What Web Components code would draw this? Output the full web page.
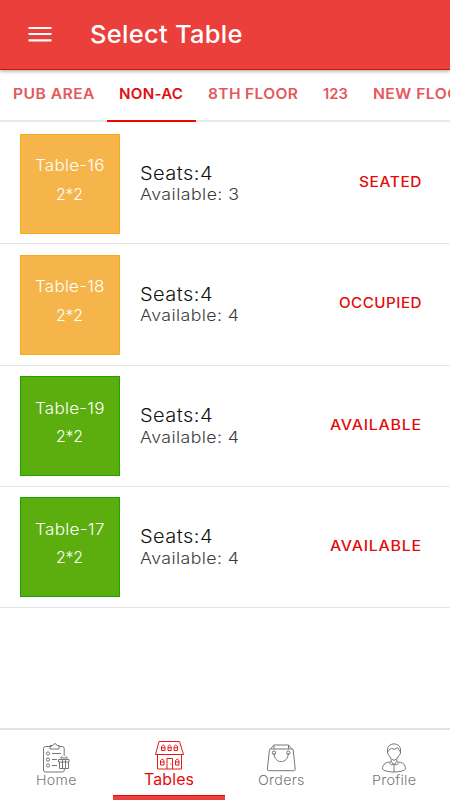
<!DOCTYPE html>
<html lang="en">
<head>
<meta charset="utf-8">
<title>Select Table</title>
<style>
html,body{margin:0;height:100%}
body{font-family:Inter,"Open Sans",sans-serif;background:#fff;overflow:hidden}
</style>
</head>
<body>
<table-app></table-app>
<script>
const shadow=(el,html)=>{const t=document.createElement('template');t.innerHTML=html;
  const r=el.attachShadow({mode:'open'});r.append(t.content.cloneNode(true));return r;};

/* One line of text, widened so that it spans the width given in "w":
   the letters take most of the extra width, the tracking takes the rest. */
class FitText extends HTMLElement{
  connectedCallback(){
    if(this.shadowRoot)return;
    const r=shadow(this,`<style>:host{display:block;white-space:nowrap;line-height:1}span{display:inline-block;transform-origin:0 0}</style><span></span>`);
    const s=r.querySelector('span'),t=this.getAttribute('text');s.textContent=t;
    const w=+this.getAttribute('w'),n=s.getBoundingClientRect().width;
    const k=1+(w/n-1)*.65,gap=(w/k-n)/(t.length-1);
    s.style.letterSpacing=gap+'px';
    s.style.transform=`scaleX(${k})`;
    this.style.width=w+'px';
  }
}

class AppHeader extends HTMLElement{
  connectedCallback(){shadow(this,`<style>
  :host{display:flex;align-items:center;box-sizing:border-box;height:70px;flex:none;background:#ea3f3b;border-bottom:1px solid #df0b08;
    padding:0 0 1px 28px;gap:38px;color:#fff;box-shadow:0 1px 4px rgba(0,0,0,.38);position:relative;z-index:1}
  svg{display:block}fit-text{font-size:24.5px;font-weight:500}
  </style><svg width="24" height="18"><path d="M.5 3h23M.5 9h23M.5 15.3h23" stroke="#fff" stroke-width="2.2"/></svg>
  <fit-text text="Select Table" w="152.500"></fit-text>`)}
}

class TabBar extends HTMLElement{
  connectedCallback(){
    const tabs=[['PUB AREA',81.5],['NON-AC',64,1],['8TH FLOOR',90],['123',25],['NEW FLOOR',97]];
    shadow(this,`<style>
    :host{display:block;height:52px;flex:none;overflow:hidden}
    div{flex:none;padding:16.5px 12.5px 0;height:52px;box-sizing:border-box;color:#e4585b;font-size:14.6px;font-weight:600;border-bottom:2px solid #e9e9e9}
    .on{color:#e01010;border-bottom-color:#e30909}
    nav{display:flex;height:52px;width:max-content}
    </style><nav>${tabs.map(([t,w,on])=>`<div class="${on?'on':''}"><fit-text text="${t}" w="${w}"></fit-text></div>`).join('')}</nav>`)}
}

class TableRow extends HTMLElement{
  connectedCallback(){
    const a=n=>this.getAttribute(n);
    shadow(this,`<style>
    :host{display:flex;box-sizing:border-box;height:121.2px;flex:none;border-bottom:1px solid #e4e4e4;padding:10.5px 29px 0 20px}
    .tile{width:100px;height:100px;box-sizing:border-box;background:${a('fill')};border:1px solid ${a('edge')};color:#fff;
      display:flex;flex-direction:column;align-items:center;padding-top:22.5px;gap:12px;font-size:16.3px;font-weight:300}
    .info{padding:30px 0 0 20px;display:flex;flex-direction:column;gap:4px;flex:1;font-weight:300;font-size:16px;color:#3c3c3c}
    .seats{font-size:18.5px;color:#111;font-weight:350}
    .state{padding-top:41.5px;font-size:14px;font-weight:500;color:#e30b0b}
    </style><div class="tile"><fit-text text="${a('name')}" w="69.500"></fit-text><fit-text text="2*2" w="29"></fit-text></div>
    <div class="info"><fit-text class="seats" text="Seats:4" w="72.500"></fit-text><fit-text text="Available: ${a('free')}" w="99"></fit-text></div>
    <fit-text class="state" text="${a('state')}" w="${a('sw')}"></fit-text>`)}
}

const icons={
 Home:`<path d="M12.5 5.5h-6q-2 0-2 2v21.500q0 2 2 2h17q1.800 0 1.800-2v-1M20 5.500h3.200q2 0 2 2V15M11 4.500h3q1-3 3-1.500l1 1.500h2V8h-9z"/>
 <circle cx="9" cy="12.500" r="1.600"/><circle cx="9" cy="18.500" r="1.600"/><circle cx="9" cy="24.500" r="1.600"/>
 <path d="M13 12.500h9M13 18.500h5M13 24.500h5M19.500 18.500h10.500v2.500H19.500zM20.500 21v6.500h9V21M23.500 18.500v9M26.500 18.500v9M25 18.500c-5 0-4-5 0-1 4-4 5 1 0 1z"/>`,
 Tables:`<path d="M6 1.500h20.500l4 13H2.500zM4.500 14.500v14.500H28.500v-14.500M14 29V18.500h5.500V29M17.700 23.500v1"/>
 <path d="M8.500 10.500v-4q1.700-3 3.500 0v4zM15 10.500v-4q1.500-3 3.200 0v4zM21 10.500v-4q1.700-3 3.500 0v4zM8.500 7.800H12M15 7.800h3.200M21 7.800h3.500M7.500 25v-4.500q1.800-3 3.500 0V25zM22.500 25v-4.500q1.800-3 3.500 0V25zM7.500 22H11M22.500 22H26"/>`,
 Orders:`<path d="M5.500 8h21.500q1 0 1.200 1l2 19q0 1.700-1.500 1.700H3.900q-1.600 0-1.500-1.700l2-19q.2-1 1.100-1zM5.500 8l3.500-4h14.500L27 8M9 4v4M23.500 4v4"/>
 <circle cx="9" cy="11.700" r="1.700"/><circle cx="23.300" cy="11.700" r="1.700"/><path d="M9 12c0 11.500 14.300 11.500 14.300 0"/>`,
 Profile:`<path d="M9.500 10C8.500 .5 23.500 .5 22.500 10M9.500 9v3q.5 2 1.500 2.300 2 5 5 5t5-5q1.300-.3 1.500-2.300V9M10.500 10.500q.3-2.500 3-3 3.500 2 6-.8 1.500 1.500 2 3.800M13.200 18.500v2L16 24l2.800-3.500v-2M13.200 20L11.500 22 13.500 24 16 23 18.500 24 20.500 22 18.800 20M16 24v7"/>
 <path d="M11.500 21c-5 .5-7 3-7 7 2.500 4 20.500 4 23 0 0-4-2-6.500-7-7"/>`};

class NavItem extends HTMLElement{
  connectedCallback(){
    const n=this.getAttribute('name'),on=this.hasAttribute('active');
    shadow(this,`<style>
    :host{flex:1;display:flex;flex-direction:column;align-items:center;box-sizing:border-box;
      padding-top:${on?9.5:11}px;gap:${on?.5:1}px;color:${on?'#e30b0b':'#777'};font-size:${on?15.5:13.5}px;font-weight:${on?400:350}}
    svg{display:block;flex:none;fill:none;stroke:${on?'#e51b1b':'#777'};stroke-width:1}
    svg.Home{margin-right:2px}
    i{margin-top:auto;align-self:stretch;height:4px;background:#ea3f3b;border-top:1px solid #df0b08}
    </style><svg class="${n}" width="32" height="32" viewBox="0 0 32 32">${icons[n]}</svg>
    <fit-text text="${n}" w="${this.getAttribute('w')}"></fit-text>${on?'<i></i>':''}`)}
}

class TableApp extends HTMLElement{
  connectedCallback(){shadow(this,`<style>
  :host{display:flex;flex-direction:column;width:450px;height:800px;overflow:hidden}
  main{flex:1;padding-top:1.300px}
  footer{display:flex;height:72px;box-sizing:border-box;border-top:2px solid #e2e2e2}
  </style><app-header></app-header><tab-bar></tab-bar><main>
  <table-row name="Table-16" free="3" state="SEATED" sw="62.500" fill="#f5b54b" edge="#f3ad18"></table-row>
  <table-row name="Table-18" free="4" state="OCCUPIED" sw="82.500" fill="#f5b54b" edge="#f3ad18"></table-row>
  <table-row name="Table-19" free="4" state="AVAILABLE" sw="91" fill="#5cae0e" edge="#18a505"></table-row>
  <table-row name="Table-17" free="4" state="AVAILABLE" sw="91" fill="#5cae0e" edge="#18a505"></table-row>
  </main><footer><nav-item name="Home" w="40.500"></nav-item><nav-item name="Tables" w="50" active></nav-item>
  <nav-item name="Orders" w="46.500"></nav-item><nav-item name="Profile" w="44"></nav-item></footer>`)}
}
customElements.define('fit-text',FitText);
customElements.define('app-header',AppHeader);
customElements.define('tab-bar',TabBar);
customElements.define('table-row',TableRow);
customElements.define('nav-item',NavItem);
customElements.define('table-app',TableApp);
</script>
</body>
</html>
